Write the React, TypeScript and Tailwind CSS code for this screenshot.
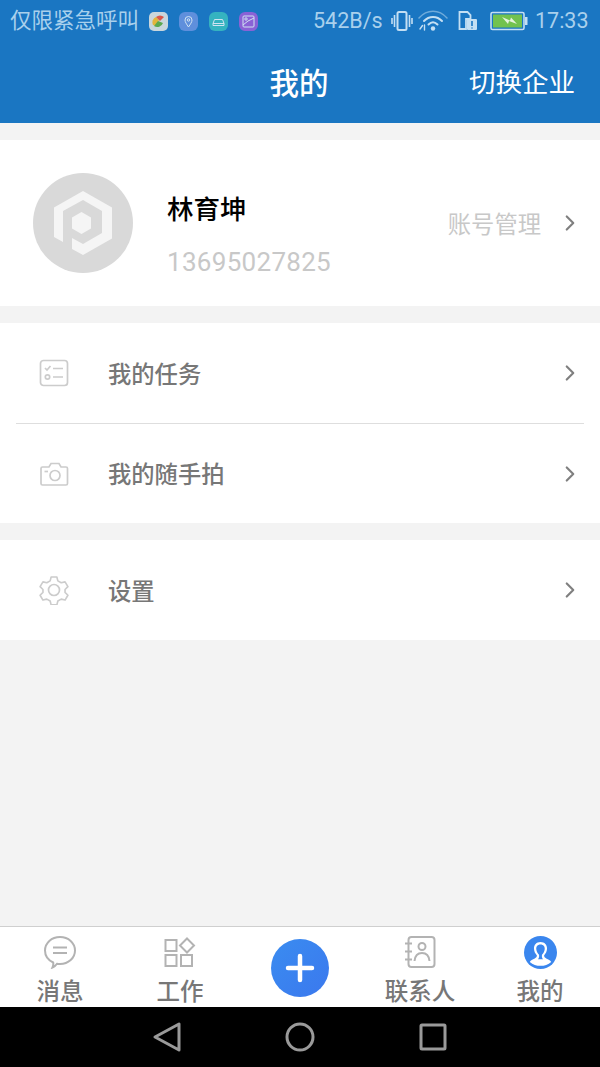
import { ChevronRight } from 'lucide-react';

const cjk = { sans: "font-['Roboto','Noto_Sans_CJK_SC',sans-serif]" };

// Small notification tiles in the status bar
function NotifyTile({ bg, children }: { bg: string; children: React.ReactNode }) {
  return (
    <div className={`w-[19px] h-[19px] rounded-[6px] flex items-center justify-center ${bg}`}>
      <svg width="15" height="15" viewBox="0 0 15 15" fill="none" stroke="#cfe3f2" strokeWidth="1">
        {children}
      </svg>
    </div>
  );
}

function StatusBar() {
  return (
    <div className="h-[42px] pl-[10px] flex items-center text-[#a9d0ec]">
      <span className="w-[129px] text-[21.500px] pt-[1px] whitespace-nowrap">仅限紧急呼叫</span>
      <div className="ml-[10px] flex gap-[11px]">
        <div className="w-[19px] h-[19px] rounded-[5px] bg-[#c9d6dc] flex items-center justify-center">
          <svg width="15" height="15" viewBox="0 0 15 15">
            <path d="M2 11a6 6 0 0 1 3-8l3 3-3 6z" fill="#e2b53c" />
            <path d="M5 3a6 6 0 0 1 8 0l-4 4z" fill="#d8574a" />
            <path d="M3 12a6 6 0 0 0 9-3L7 7z" fill="#5ba84f" />
          </svg>
        </div>
        <NotifyTile bg="bg-[#5f8fdc]">
          <path d="M7.5 13c-2-3-3.500-5-3.500-7a3.500 3.500 0 0 1 7 0c0 2-1.500 4-3.500 7z" />
          <circle cx="7.500" cy="6" r="1.200" />
        </NotifyTile>
        <NotifyTile bg="bg-[#35b3c0]">
          <path d="M2 9.500l1.500-4h8l1.500 4v2H2z" />
          <path d="M2 9.500h11" />
        </NotifyTile>
        <NotifyTile bg="bg-[#8a62d6]">
          <rect x="2" y="2" width="11" height="11" rx="1" />
          <path d="M2 11l5-4 6-3" />
          <circle cx="5" cy="5" r="1.200" />
        </NotifyTile>
      </div>
      <span className="ml-[55px] w-[70px] text-[21.500px] pt-[1px] whitespace-nowrap">542B/s</span>
      {/* vibrate, wifi, sim and battery glyphs */}
      <svg className="ml-[8px]" width="22" height="24" viewBox="0 0 22 24" fill="none" stroke="#c4dff3" strokeWidth="1.600">
        <rect x="6.500" y="3" width="9" height="18" rx="1.500" strokeWidth="2" />
        <path d="M3.500 6v12M1 9v6M18.500 6v12M21 9v6" />
      </svg>
      <svg className="ml-[5px]" width="30" height="24" viewBox="0 0 30 24" fill="none" stroke="#c4dff3" strokeLinecap="round">
        <path d="M1 9C9 0 21 0 29 9" strokeWidth="1.500" opacity="0.5" />
        <path d="M6 12c5-5.500 13-5.500 18 0" strokeWidth="2" />
        <path d="M10.500 15.500c3-3 6-3 9 0" strokeWidth="2" />
        <circle cx="15" cy="19.500" r="2.200" fill="#c4dff3" stroke="none" />
        <path d="M2 20l2.500-3.500M6.500 16v5" strokeWidth="1.400" />
      </svg>
      <svg className="ml-[10px]" width="20" height="22" viewBox="0 0 20 22" fill="none">
        <path d="M1.500 2h8l3 3v4H8v10H1.500z" stroke="#c4dff3" strokeWidth="1.800" />
        <rect x="9" y="9" width="10" height="11" rx="1" fill="#c4dff3" />
        <path d="M14 11v5M14 17.500v1" stroke="#1a76c2" strokeWidth="1.600" />
      </svg>
      <svg className="ml-[12px]" width="38" height="20" viewBox="0 0 38 20">
        <rect x="1" y="1.500" width="33" height="17" rx="1.500" fill="none" stroke="#c4dff3" strokeWidth="1.600" />
        <rect x="3" y="3.500" width="29" height="13" fill="#72c24e" />
        <rect x="35" y="6" width="2.500" height="8" fill="#c4dff3" />
        <path d="M12 6l8 3.500 1-3 6 6.500-8-3-1 3z" fill="#e6f3dc" />
      </svg>
      <span className="ml-[7px] text-[21.500px] pt-[1px] whitespace-nowrap">17:33</span>
    </div>
  );
}

function Header() {
  return (
    <div className="bg-[#1a76c2] h-[123px] flex flex-col shrink-0">
      <StatusBar />
      <div className="flex items-center h-[81px] pt-[3px] pr-[2px] text-white">
        <div className="flex-1 text-center text-[29.500px] font-medium">我的</div>
      </div>
    </div>
  );
}

// Hexagon "P" mark used as the default avatar
function AvatarMark() {
  return (
    <div className="w-[100px] h-[100px] rounded-full bg-[#d9d9d9] flex items-center justify-center">
      <svg width="60" height="66" viewBox="0 0 60 66">
        <path
          d="M30 1 59 17.500V48.500L30 65 19 59V48L30 54 49 43V21L30 10 10 21V52L1 47V17.500z"
          fill="#f5f5f5"
        />
        <path d="M28.500 22 38 27.500V38.500L28.500 44 19 38.500V27.500z" fill="#f5f5f5" />
      </svg>
    </div>
  );
}

function MenuRow({ icon, label, height = 'h-[100px]' }: { icon: React.ReactNode; label: string; height?: string }) {
  return (
    <div className={`${height} pl-[38px] pr-[20px] flex items-center`}>
      <div className="w-[32px] flex justify-center">{icon}</div>
      <span className="ml-[38px] pt-[4px] flex-1 text-[23.300px] font-medium text-[#777777]">{label}</span>
      <ChevronRight size={26} strokeWidth={2} className="text-[#808080] mr-[-3px]" />
    </div>
  );
}

function TabItem({ icon, label }: { icon: React.ReactNode; label: string }) {
  return (
    <div className="flex flex-col items-center w-[120px] pt-[8px]">
      <div className="h-[34px] flex items-center justify-center">{icon}</div>
      <span className="text-[23.500px] leading-[30px] mt-[8px] font-medium text-[#777777] whitespace-nowrap">{label}</span>
    </div>
  );
}

export default function App() {
  return (
    <div className={`w-[600px] h-[1067px] flex flex-col bg-[#f3f3f3] overflow-hidden ${cjk.sans}`}>
      <div className="relative">
        <Header />
        <span className="absolute right-[25px] top-[65px] text-[26.500px] leading-[36px] text-white whitespace-nowrap">切换企业</span>
      </div>

      {/* Profile card */}
      <div className="mt-[17px] h-[166px] bg-white pl-[33px] pr-[20px] flex items-center">
        <AvatarMark />
        <div className="ml-[34px] flex-1 pt-[25px]">
          <div className="text-[26.500px] leading-[36px] font-medium text-black">林育坤</div>
          <div className="mt-[17px] text-[26px] leading-[34px] text-[#c8c8c8] tracking-[0.3px]">13695027825</div>
        </div>
        <span className="pt-[4px] text-[23.300px] text-[#c8c8c8]">账号管理</span>
        <ChevronRight size={26} strokeWidth={2} className="ml-[16px] text-[#808080] mr-[-3px]" />
      </div>

      {/* Task and snapshot rows */}
      <div className="mt-[17px] bg-white">
        <MenuRow
          label="我的任务"
          icon={
            <svg width="30" height="28" viewBox="0 0 30 28" fill="none" stroke="#cccccc" strokeWidth="1.700">
              <rect x="1.500" y="1.500" width="27" height="25" rx="3" />
              <path d="M6 9l2 2 3.500-4M14 9.500h10M14 18h10" />
              <circle cx="8.500" cy="18" r="2.200" />
            </svg>
          }
        />
        <div className="mx-[16px] h-[1px] bg-[#dedede]" />
        <MenuRow
          label="我的随手拍"
          height="h-[99px]"
          icon={
            <svg width="30" height="24" viewBox="0 0 30 24" fill="none" stroke="#cccccc" strokeWidth="1.700">
              <path d="M2 6.500c0-1 .5-1.500 1.500-1.500H10l2-3.500h8l2 3.500h5c1 0 1.500 .5 1.500 1.500v15c0 1-.5 1.500-1.500 1.500H3.500C2.500 23 2 22.500 2 21.500z" />
              <circle cx="16" cy="13.500" r="5" />
              <path d="M5.500 9.500H9" />
            </svg>
          }
        />
      </div>

      <div className="mt-[17px] bg-white">
        <MenuRow
          label="设置"
          icon={
            <svg width="30" height="30" viewBox="0 0 30 30" fill="none" stroke="#cccccc" strokeWidth="1.700" strokeLinejoin="round">
              <path d="M12 1.500h6l1 4 3.500 2 4-1 3 5-3 3v3l3 3-3 5-4-1-3.500 2-1 4h-6l-1-4-3.500-2-4 1-3-5 3-3v-3l-3-3 3-5 4 1 3.500-2z" transform="translate(0.600 0.600) scale(0.96)" />
              <circle cx="15" cy="15" r="5.500" />
            </svg>
          }
        />
      </div>

      <div className="flex-1" />

      {/* Bottom tabs */}
      <div className="h-[81px] bg-white border-t border-[#cfcfcf] flex shrink-0">
        <TabItem
          label="消息"
          icon={
            <svg width="34" height="34" viewBox="0 0 34 34" fill="none" stroke="#b3b3b3" strokeWidth="2">
              <path d="M17 2c8.500 0 15 6 15 13.500S25.500 29 17 29c-1 0-2 0-3-.2-1 1.500-2.500 3-4.500 3.700 .8-1.700 1-3.200 .7-5C5 25 2 20.500 2 15.500 2 8 8.500 2 17 2z" />
              <path d="M10 12.500h14M10 18h14" />
            </svg>
          }
        />
        <TabItem
          label="工作"
          icon={
            <svg width="32" height="32" viewBox="0 0 32 32" fill="none" stroke="#b3b3b3" strokeWidth="2">
              <rect x="1.500" y="4" width="11" height="11" />
              <rect x="1.500" y="19" width="11" height="11" />
              <rect x="17" y="19" width="11" height="11" />
              <path d="M23 2.500l7 7-7 7-7-7z" />
            </svg>
          }
        />
        <div className="w-[120px] flex justify-center pt-[12px]">
          <div className="w-[58px] h-[58px] rounded-full bg-gradient-to-br from-[#3a8cf0] to-[#3b78ee] flex items-center justify-center">
            <svg width="30" height="30" viewBox="0 0 30 30" stroke="white" strokeWidth="4.500" strokeLinecap="round">
              <path d="M15 3v24M3 15h24" />
            </svg>
          </div>
        </div>
        <TabItem
          label="联系人"
          icon={
            <svg width="32" height="34" viewBox="0 0 32 34" fill="none" stroke="#b3b3b3" strokeWidth="2">
              <rect x="4.500" y="2" width="26" height="30" rx="3" />
              <path d="M1 8.500h7M1 16.500h7M1 24.500h7" />
              <circle cx="18" cy="11.500" r="3.500" />
              <path d="M10.500 26c.5-5 3.500-8 7.500-8s7 3 7.500 8" />
            </svg>
          }
        />
        <TabItem
          label="我的"
          icon={
            <svg width="33" height="33" viewBox="0 0 33 33">
              <circle cx="16.500" cy="16.500" r="16.500" fill="#3a86ee" />
              <path
                d="M16.500 6c-4.500 0-6.800 3.300-6.500 7 .2 2.500 1.200 4.500 2.800 6.200.3 1.600-.5 2.600-2 3.200-2.300.8-4 1.700-5 3.500a16.500 16.500 0 0 0 21.400 0c-1-1.800-2.700-2.700-5-3.500-1.500-.6-2.300-1.600-2-3.200 1.600-1.700 2.600-3.700 2.800-6.200.3-3.700-2-7-6.500-7z"
                fill="white"
              />
              <path
                d="M16.500 8.500c-3 0-4.500 2.200-4.200 4.700.2 2.200 1.200 4 2.700 5.500.4 1.900 0 3.400-1 4.500h5c-1-1.100-1.400-2.600-1-4.500 1.500-1.500 2.500-3.300 2.700-5.500.3-2.500-1.200-4.700-4.200-4.700z"
                fill="#3a86ee"
              />
            </svg>
          }
        />
      </div>

      {/* Android navigation keys */}
      <div className="h-[60px] bg-black flex items-center justify-center pr-[2px] shrink-0 text-[#9a9a9a]">
        <svg width="30" height="32" viewBox="0 0 30 32" fill="none" stroke="currentColor" strokeWidth="3" strokeLinejoin="round" className="mr-[103px]">
          <path d="M27 3v26L3 16z" />
        </svg>
        <svg width="30" height="30" viewBox="0 0 30 30" fill="none" stroke="currentColor" strokeWidth="3">
          <circle cx="15" cy="15" r="13" />
        </svg>
        <svg width="28" height="28" viewBox="0 0 28 28" fill="none" stroke="currentColor" strokeWidth="3" className="ml-[104px]">
          <rect x="2" y="2" width="24" height="24" rx="1" />
        </svg>
      </div>
    </div>
  );
}
